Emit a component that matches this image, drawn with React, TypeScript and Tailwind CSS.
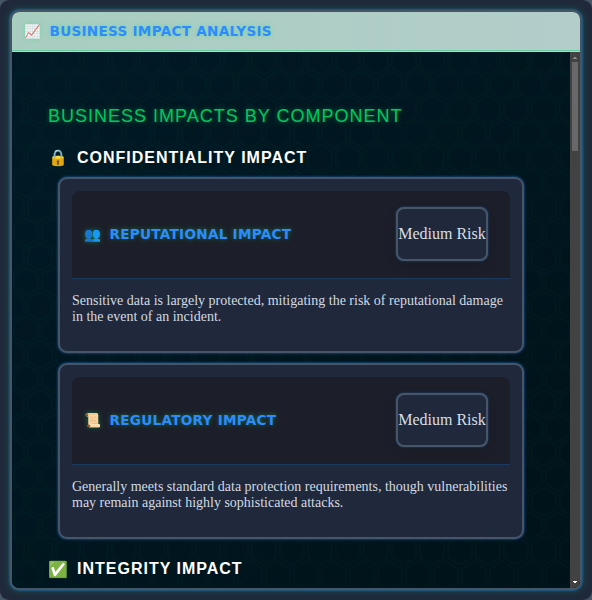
import React from "react";

const HEX =
  "M13.99 9.25l13 7.5v15l-13 7.5L1 31.75v-15l12.99-7.5zM3 17.9v12.7l10.99 6.34 11-6.35V17.9l-11-6.34L3 17.9zM0 15l12.98-7.5V0h-2v6.35L0 12.69v2.3zm0 18.5L12.98 41v8h-2v-6.85L0 35.81v-2.3zM15 0v7.5L27.99 15H28v-2.31h-.01L17 6.35V0h-2zm0 49v-8l12.99-7.5H28v2.31h-.01L17 42.15V49h-2z";

function HexBackdrop() {
  return (
    <svg className="pointer-events-none absolute inset-0 h-full w-full">
      <defs>
        <pattern id="hex" width="28" height="49" patternUnits="userSpaceOnUse">
          <path d={HEX} fill="#00e676" fillOpacity="0.018" />
        </pattern>
      </defs>
      <rect width="100%" height="100%" fill="url(#hex)" />
    </svg>
  );
}

function ImpactCard({ icon, title, text }: { icon: string; title: string; text: string }) {
  return (
    <article className="h-[176px] rounded-[9px] border-2 border-[#475569] bg-[#1f293b] px-3 pt-3 shadow-[0_0_2px_1px_rgba(30,100,180,0.5)]">
      <header className="flex h-[88px] items-center justify-between rounded-t-[8px] border-b border-[#1c3a5f] bg-[#1c1f29] pr-[22px] pb-px pl-3">
        <h4 className="flex items-center font-['DejaVu_Sans',sans-serif] text-[13.6px] leading-4 font-bold tracking-[0.27px] text-[#2e8bff] [text-shadow:0_0_5px_rgba(0,230,118,0.4)]">
          <span className="w-[25.5px]">{icon}</span>
          {title}
        </h4>
        <div className="flex h-[54px] w-[92px] items-center justify-center rounded-[8px] border-2 border-[#475569] bg-[#1f293b] text-base whitespace-nowrap text-[#d8dee7] shadow-[0_0_2px_rgba(30,100,180,0.8),0_4px_12px_rgba(0,0,0,0.12)]">
          Medium Risk
        </div>
      </header>
      <p className="mt-[14px] text-[14px] leading-4 text-[#d3dae3]">{text}</p>
    </article>
  );
}

function SectionTitle({ icon, children }: { icon: React.ReactNode; children: React.ReactNode }) {
  return (
    <h3 className="flex h-5 items-center font-['Liberation_Sans',sans-serif] text-base font-bold tracking-[1px] text-white">
      <span className="w-[29px] tracking-normal">{icon}</span>
      {children}
    </h3>
  );
}

export default function App() {
  return (
    <div className="h-[600px] w-[592px] overflow-hidden bg-[#475569] font-['Liberation_Serif',serif]">
      <div className="h-full rounded-[9px] bg-[#1f293b] p-[10px]">
        <div className="h-full rounded-[9px] border-2 border-[#475569] bg-[#1f293b] shadow-[0_0_2px_1px_rgba(30,110,180,0.65),0_0_10px_rgba(0,230,118,0.22)]">
          <section className="relative flex h-full flex-col overflow-hidden rounded-[7px] bg-linear-to-br from-[#001a26] to-[#001219]">
            <HexBackdrop />
            <header className="relative flex h-10 shrink-0 items-center border-b border-[#b1dbc9] bg-linear-to-r from-[#a8cec0] to-[#b3cdca] pl-3 shadow-[inset_0_-1px_0_#66cda3]">
              <h2 className="mb-[1.5px] flex items-center font-['DejaVu_Sans',sans-serif] text-[13.6px] leading-4 font-bold tracking-[0.27px] text-[#2e8bff] [text-shadow:0_0_5px_rgba(0,230,118,0.4)]">
                <span className="w-[25.5px] opacity-80">📈</span>
                BUSINESS IMPACT ANALYSIS
              </h2>
            </header>
            <div className="relative flex min-h-0 flex-1">
              <main className="w-[558px] overflow-hidden pt-[52px] pr-[46px] pl-9">
                <h2 className="h-6 font-['Liberation_Sans',sans-serif] text-[18px] leading-6 tracking-[1px] text-[#00c860] [text-shadow:0_0_5px_rgba(0,200,83,0.5)]">
                  BUSINESS IMPACTS BY COMPONENT
                </h2>
                <div className="mt-5">
                  <SectionTitle icon="🔒">CONFIDENTIALITY IMPACT</SectionTitle>
                </div>
                <div className="mt-[9px] ml-[10px] flex flex-col gap-[10px]">
                  <ImpactCard
                    icon="👥"
                    title="REPUTATIONAL IMPACT"
                    text="Sensitive data is largely protected, mitigating the risk of reputational damage in the event of an incident."
                  />
                  <ImpactCard
                    icon="📜"
                    title="REGULATORY IMPACT"
                    text="Generally meets standard data protection requirements, though vulnerabilities may remain against highly sophisticated attacks."
                  />
                </div>
                <div className="mt-5">
                  <SectionTitle icon={<span className="block pt-0.5">✅</span>}>INTEGRITY IMPACT</SectionTitle>
                </div>
              </main>
              <div className="flex w-[10px] flex-col items-center justify-between bg-[#424242] pb-[5px]">
                <div className="flex flex-col items-center">
                  <svg className="h-[10px] w-[10px]" viewBox="0 0 10 10" shapeRendering="crispEdges">
                    <path d="M4 5h2v1h1v1H3V6h1z" fill="#8a8a8a" />
                  </svg>
                  <div className="h-[89px] w-[6px] bg-[#686868]" />
                </div>
                <svg className="h-[2px] w-1" viewBox="0 0 4 2" shapeRendering="crispEdges">
                  <path d="M0 0h4v1H3v1H1V1H0z" fill="#fff" />
                </svg>
              </div>
            </div>
          </section>
        </div>
      </div>
    </div>
  );
}
